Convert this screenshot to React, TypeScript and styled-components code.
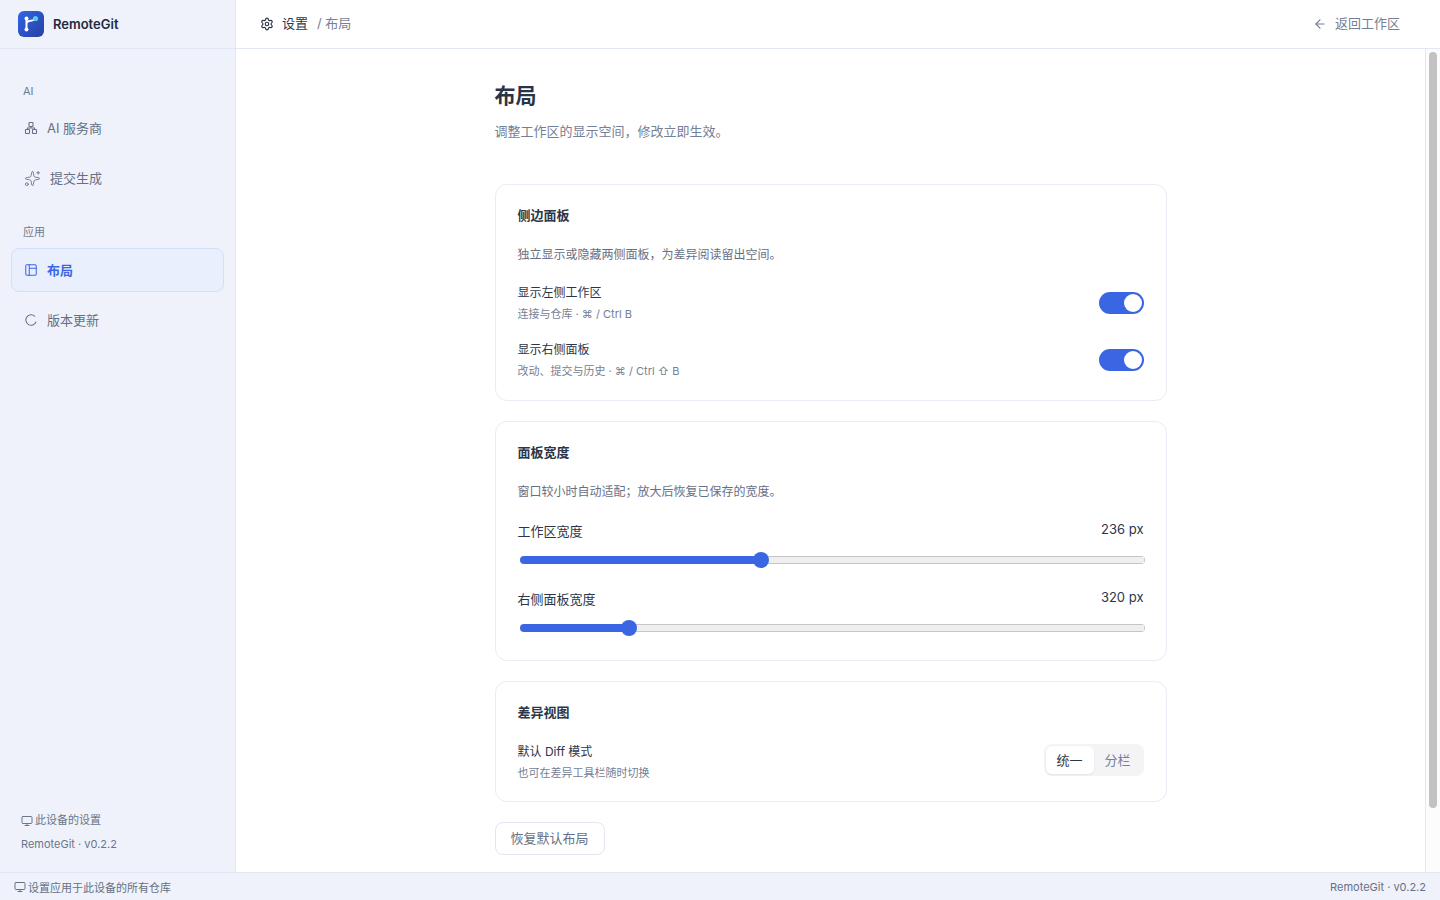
import { useState } from 'react';
import styled, { createGlobalStyle } from 'styled-components';
import { ArrowLeft, Monitor, Settings, Sparkles } from 'lucide-react';

const GlobalStyle = createGlobalStyle`
  html, body, #root {
    height: 100%;
    margin: 0;
  }

  body {
    font-family: Inter, "Noto Sans CJK SC", sans-serif;
    color: #1f2937;
    background: #fff;
    overflow: hidden;
  }

  * {
    box-sizing: border-box;
  }
`;

const Shell = styled.div`
  display: flex;
  flex-direction: column;
  height: 100vh;
`;

const Body = styled.div`
  display: flex;
  flex: 1;
  min-height: 0;
`;

const Sidebar = styled.aside`
  display: flex;
  flex-direction: column;
  flex: 0 0 236px;
  background: #eff2fa;
  border-right: 1px solid #e2e8f3;
`;

const Brand = styled.div`
  display: flex;
  align-items: center;
  gap: 9px;
  height: 49px;
  padding: 0 18px 1px;
  border-bottom: 1px solid #e2e8f3;
  font-size: 13px;
  font-weight: 600;
  color: #232a3b;
`;

const Nav = styled.nav`
  display: flex;
  flex-direction: column;
  flex: 1;
  gap: 6px;
  padding: 0 11px;
`;

const NavLabel = styled.div<{ $first?: boolean }>`
  margin: ${({ $first }) => ($first ? '35px 0 0' : '19px 0 1px')};
  padding: 0 12px;
  height: 16px;
  line-height: 14px;
  font-size: 11px;
  color: #6f7a8e;
`;

const NavItem = styled.a<{ $active?: boolean; $gap?: number }>`
  display: flex;
  align-items: center;
  gap: ${({ $gap }) => $gap ?? 9}px;
  height: 44px;
  padding: 0 12px 2px;
  border: 1px solid ${({ $active }) => ($active ? '#d3e0fb' : 'transparent')};
  border-radius: 8px;
  background: ${({ $active }) => ($active ? '#e9effc' : 'transparent')};
  color: ${({ $active }) => ($active ? '#3b66e3' : '#667085')};
  font-size: 13px;
  font-weight: ${({ $active }) => ($active ? 600 : 400)};

  svg {
    position: relative;
    top: 1px;
  }
`;

const SidebarFooter = styled.div`
  display: flex;
  flex-direction: column;
  gap: 9px;
  padding: 0 21px 20px;
  font-size: 11px;
  line-height: 15px;
  color: #6b7589;
`;

const DeviceNote = styled.div`
  display: flex;
  align-items: center;
  gap: 2px;
`;

const Main = styled.main`
  display: flex;
  flex-direction: column;
  flex: 1;
  min-width: 0;
`;

const TopBar = styled.header`
  display: flex;
  align-items: center;
  justify-content: space-between;
  flex: 0 0 49px;
  padding: 0 40px 3px 24px;
  border-bottom: 1px solid #e2e8f3;
  font-size: 13px;

  svg {
    position: relative;
    top: 1px;
  }
`;

const Crumbs = styled.div`
  display: flex;
  align-items: center;
  color: #2d3648;
`;

const CrumbRoot = styled.span`
  margin-left: 8px;
`;

const CrumbLeaf = styled.span`
  margin-left: 9px;
  color: #748095;
`;

const BackLink = styled.a`
  display: flex;
  align-items: center;
  gap: 8px;
  color: #748095;
`;

const ContentArea = styled.div`
  display: flex;
  flex: 1;
  min-height: 0;
`;

const Scroller = styled.div`
  flex: 1;
  min-width: 0;
  overflow-y: auto;
  scrollbar-width: none;
  padding: 33px 0 17px;
`;

const ScrollRail = styled.div`
  flex: 0 0 15px;
  padding: 3px 3px 0 3px;
  background: #fcfcfc;
  border-left: 1px solid #e8e8e8;
`;

const ScrollThumb = styled.div`
  height: 756px;
  border-radius: 4px;
  background: #c2c2c2;
`;

const Column = styled.div`
  display: flex;
  flex-direction: column;
  width: 672px;
  margin: 0 auto;
`;

const PageTitle = styled.h1`
  margin: 0;
  font-size: 21px;
  line-height: 28px;
  font-weight: 700;
  color: #2a3346;
`;

const PageIntro = styled.p`
  margin: 11px 0 43px;
  font-size: 13px;
  line-height: 20px;
  color: #748095;
`;

const Card = styled.section<{ $bottom: number }>`
  display: flex;
  flex-direction: column;
  margin-bottom: 20px;
  padding: 22px 22px ${({ $bottom }) => $bottom}px;
  background: #fff;
  border: 1.5px solid #e9ecf4;
  border-radius: 12px;
`;

const CardTitle = styled.h2`
  margin: 0;
  font-size: 13px;
  line-height: 17px;
  font-weight: 700;
  color: #2d3648;
`;

const CardHint = styled.p`
  margin: 23px 0 0;
  font-size: 12px;
  line-height: 16px;
  color: #667085;
`;

const SettingRow = styled.div<{ $top: number }>`
  display: flex;
  align-items: center;
  justify-content: space-between;
  margin-top: ${({ $top }) => $top}px;
`;

const SettingName = styled.div`
  font-size: 12px;
  line-height: 16px;
  color: #2d3648;
`;

const SettingSub = styled.div`
  margin-top: 6px;
  font-size: 11px;
  line-height: 14px;
  color: #748095;
`;

const Toggle = styled.button<{ $on: boolean }>`
  display: flex;
  align-items: center;
  justify-content: ${({ $on }) => ($on ? 'flex-end' : 'flex-start')};
  width: 45px;
  height: 22px;
  padding: 2px;
  border: 0;
  border-radius: 11px;
  background: ${({ $on }) => ($on ? '#3b66e3' : '#cbd2de')};

  &::after {
    content: '';
    width: 18px;
    height: 18px;
    border-radius: 50%;
    background: #fff;
  }
`;

const SliderHead = styled.div<{ $top: number }>`
  display: flex;
  justify-content: space-between;
  margin-top: ${({ $top }) => $top}px;
  font-size: 13px;
  line-height: 18px;
  color: #2d3648;
`;

const SliderValue = styled.span`
  position: relative;
  top: -2px;
`;

const Range = styled.input`
  display: block;
  width: 625px;
  height: 16px;
  margin: 12px -1px 0 2px;
  appearance: none;
  background: transparent;

  &::-webkit-slider-runnable-track {
    height: 8px;
    border-radius: 4px;
    background:
      linear-gradient(#3b66e3, #3b66e3) no-repeat left / var(--fill) 100%,
      linear-gradient(#efefef, #efefef) no-repeat center / calc(100% - 2px) 6px,
      #c6c6c6;
  }

  &::-webkit-slider-thumb {
    appearance: none;
    width: 16px;
    height: 16px;
    margin-top: -4px;
    border-radius: 50%;
    background: #3b66e3;
  }
`;

const Segments = styled.div`
  display: flex;
  width: 100px;
  height: 32px;
  margin-bottom: 4px;
  padding: 2px;
  border-radius: 8px;
  background: #f4f4f6;
`;

const Segment = styled.button<{ $active: boolean }>`
  flex: ${({ $active }) => ($active ? '0 0 48px' : '1')};
  border: 0;
  border-radius: 6px;
  padding: 0;
  background: ${({ $active }) => ($active ? '#fff' : 'transparent')};
  box-shadow: ${({ $active }) => ($active ? '0 1px 2px rgba(30, 40, 70, 0.08)' : 'none')};
  color: ${({ $active }) => ($active ? '#2d3648' : '#748095')};
  font: inherit;
  font-size: 13px;
`;

const ResetButton = styled.button`
  align-self: flex-start;
  width: 110px;
  height: 33px;
  padding: 0 0 1px;
  border: 1.5px solid #e2e6f0;
  border-radius: 8px;
  background: #fff;
  color: #667085;
  font: inherit;
  font-size: 13px;
`;

const StatusBar = styled.footer`
  display: flex;
  align-items: center;
  justify-content: space-between;
  flex: 0 0 28px;
  padding: 0 14px;
  background: #eff2fa;
  border-top: 1px solid #e2e8f3;
  font-size: 11px;
  color: #667085;
`;

function Logo() {
  return (
    <svg width="26" height="26" viewBox="0 0 26 26">
      <defs>
        <linearGradient id="logo-fill" x1="0" y1="0" x2="1" y2="1">
          <stop offset="0" stopColor="#2f66e8" />
          <stop offset="1" stopColor="#2a3f9f" />
        </linearGradient>
      </defs>
      <rect width="26" height="26" rx="6" fill="url(#logo-fill)" />
      <path d="M8.5 7.5v11M8.5 13c0-2 2-3 4-3.2 2-.2 3.5-.8 4-1.6" fill="none" stroke="#fff" strokeWidth="2" />
      <circle cx="8.5" cy="7.5" r="2" fill="#fff" />
      <circle cx="8.5" cy="18.5" r="2" fill="#fff" />
      <circle cx="17.5" cy="7.5" r="2.6" fill="#5cc8ec" />
    </svg>
  );
}

function ProvidersIcon() {
  return (
    <svg width="14" height="14" viewBox="0 0 14 14" fill="none" stroke="currentColor" strokeWidth="1.1">
      <rect x="5" y="1.5" width="4" height="4" rx="0.5" />
      <rect x="1.5" y="8.5" width="4" height="4" rx="0.5" />
      <rect x="8.5" y="8.5" width="4" height="4" rx="0.5" />
      <path d="M7 5.5V7M3.5 8.5V7h7v1.5" />
    </svg>
  );
}

function LayoutIcon() {
  return (
    <svg width="14" height="14" viewBox="0 0 24 24" fill="none" stroke="currentColor" strokeWidth="1.75" strokeLinecap="round" strokeLinejoin="round">
      <rect x="3" y="3" width="18" height="18" rx="2" />
      <path d="M9 3v18M9 9h12" />
    </svg>
  );
}

function UpdateIcon() {
  return (
    <svg width="14" height="14" viewBox="0 0 24 24" fill="none" stroke="currentColor" strokeWidth="1.75" strokeLinecap="round">
      <path d="M20.5 15.5A9 9 0 1 1 18.4 5.6" />
    </svg>
  );
}

function SliderSetting({ label, min, max, initial, top }: { label: string; min: number; max: number; initial: number; top: number }) {
  const [value, setValue] = useState(initial);
  const thumbCenter = 8 + ((value - min) / (max - min)) * 609;

  return (
    <>
      <SliderHead $top={top}>
        <span>{label}</span>
        <SliderValue>{value} px</SliderValue>
      </SliderHead>
      <Range
        type="range"
        min={min}
        max={max}
        value={value}
        onChange={e => setValue(Number(e.target.value))}
        style={{ '--fill': `${thumbCenter}px` } as React.CSSProperties}
      />
    </>
  );
}

export default function App() {
  const [showLeft, setShowLeft] = useState(true);
  const [showRight, setShowRight] = useState(true);
  const [diffMode, setDiffMode] = useState('unified');

  return (
    <Shell>
      <GlobalStyle />
      <Body>
        <Sidebar>
          <Brand>
            <Logo />
            RemoteGit
          </Brand>
          <Nav>
            <NavLabel $first>AI</NavLabel>
            <NavItem>
              <ProvidersIcon />
              AI 服务商
            </NavItem>
            <NavItem>
              <Sparkles size={17} strokeWidth={1.2} />
              提交生成
            </NavItem>
            <NavLabel>应用</NavLabel>
            <NavItem $active>
              <LayoutIcon />
              布局
            </NavItem>
            <NavItem>
              <UpdateIcon />
              版本更新
            </NavItem>
          </Nav>
          <SidebarFooter>
            <DeviceNote>
              <Monitor size={12} />
              此设备的设置
            </DeviceNote>
            <div>RemoteGit · v0.2.2</div>
          </SidebarFooter>
        </Sidebar>
        <Main>
          <TopBar>
            <Crumbs>
              <Settings size={14} />
              <CrumbRoot>设置</CrumbRoot>
              <CrumbLeaf>/ 布局</CrumbLeaf>
            </Crumbs>
            <BackLink>
              <ArrowLeft size={14} />
              返回工作区
            </BackLink>
          </TopBar>
          <ContentArea>
            <Scroller>
              <Column>
                <PageTitle>布局</PageTitle>
                <PageIntro>{'调整工作区的显示空间\uFF0C修改立即生效。'}</PageIntro>

                <Card $bottom={22}>
                  <CardTitle>侧边面板</CardTitle>
                  <CardHint>{'独立显示或隐藏两侧面板\uFF0C为差异阅读留出空间。'}</CardHint>
                  <SettingRow $top={22}>
                    <div>
                      <SettingName>显示左侧工作区</SettingName>
                      <SettingSub>连接与仓库 · ⌘ / Ctrl B</SettingSub>
                    </div>
                    <Toggle $on={showLeft} onClick={() => setShowLeft(!showLeft)} />
                  </SettingRow>
                  <SettingRow $top={20.5}>
                    <div>
                      <SettingName>显示右侧面板</SettingName>
                      <SettingSub>改动、提交与历史 · ⌘ / Ctrl ⇧ B</SettingSub>
                    </div>
                    <Toggle $on={showRight} onClick={() => setShowRight(!showRight)} />
                  </SettingRow>
                </Card>

                <Card $bottom={24}>
                  <CardTitle>面板宽度</CardTitle>
                  <CardHint>{'窗口较小时自动适配\uFF1B放大后恢复已保存的宽度。'}</CardHint>
                  <SliderSetting label="工作区宽度" min={180} max={326} initial={236} top={22} />
                  <SliderSetting label="右侧面板宽度" min={280} max={520} initial={320} top={22} />
                </Card>

                <Card $bottom={21}>
                  <CardTitle>差异视图</CardTitle>
                  <SettingRow $top={23}>
                    <div>
                      <SettingName>默认 Diff 模式</SettingName>
                      <SettingSub>也可在差异工具栏随时切换</SettingSub>
                    </div>
                    <Segments>
                      <Segment $active={diffMode === 'unified'} onClick={() => setDiffMode('unified')}>统一</Segment>
                      <Segment $active={diffMode === 'split'} onClick={() => setDiffMode('split')}>分栏</Segment>
                    </Segments>
                  </SettingRow>
                </Card>

                <ResetButton>恢复默认布局</ResetButton>
              </Column>
            </Scroller>
            <ScrollRail>
              <ScrollThumb />
            </ScrollRail>
          </ContentArea>
        </Main>
      </Body>
      <StatusBar>
        <DeviceNote>
          <Monitor size={12} />
          设置应用于此设备的所有仓库
        </DeviceNote>
        <span>RemoteGit · v0.2.2</span>
      </StatusBar>
    </Shell>
  );
}
